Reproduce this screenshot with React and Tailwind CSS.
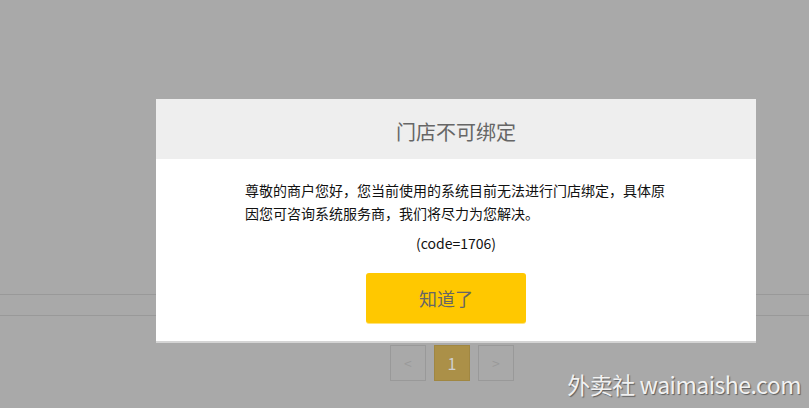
import React from 'react';

const font = { fontFamily: '"Noto Sans CJK SC", "Noto Sans", sans-serif' };

const Pager = () => (
  <div className="ml-[390px] mt-[29px] flex gap-2">
    <div className="flex h-[36px] w-[36px] items-center justify-center border border-[#999] text-[14px] text-[#999]">&lt;</div>
    <div className="flex h-[36px] w-[36px] items-center justify-center border border-[#a08742] bg-[#ab9048] text-[16px] text-[#cfcfcf]">1</div>
    <div className="flex h-[36px] w-[36px] items-center justify-center border border-[#999] text-[14px] text-[#999]">&gt;</div>
  </div>
);

export default function App() {
  return (
    <div className="relative h-[408px] w-[809px] overflow-hidden bg-[#a9a9a9]" style={font}>
      {/* page behind the overlay */}
      <div className="h-[294px]" />
      <div className="h-[22px] border-t border-b border-[#999]" />
      <Pager />

      {/* dialog */}
      <div className="absolute left-[156px] top-[99px] w-[600px] border-b-2 border-[#d4d4d4] bg-white">
        <div className="flex h-[60px] items-center justify-center bg-[#eeeeee] pt-[5px] text-[20px] text-[#666]">
          门店不可绑定
        </div>
        <div className="flex flex-col items-center pt-[20px] pb-[18px]">
          <p className="w-[422px] text-[14px] leading-[23px] text-[#111]">
            尊敬的商户您好，您当前使用的系统目前无法进行门店绑定，具体原因您可咨询系统服务商，我们将尽力为您解决。
          </p>
          <p className="mt-[7px] text-[14px] leading-[23px] text-[#111]">(code=1706)</p>
          <button className="mt-[18px] mr-[20px] h-[50px] w-[160px] rounded-[3px] bg-[#ffc800] text-[18px] text-[#666] shadow-[0_1px_0_#ffe27a]">
            知道了
          </button>
        </div>
      </div>

      {/* watermark */}
      <div className="absolute right-[8px] bottom-[7px] text-[23px] tracking-[-0.5px] text-[#f2f2f2] [text-shadow:1px_1px_1px_rgba(0,0,0,0.45)]">
        外卖社 waimaishe.com
      </div>
    </div>
  );
}
